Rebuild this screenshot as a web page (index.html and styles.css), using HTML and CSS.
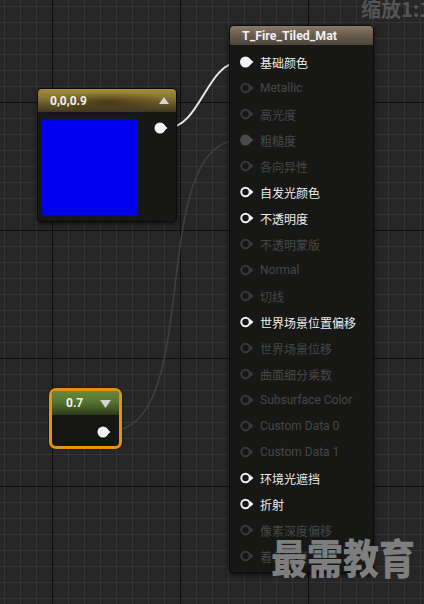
FILE: index.html
```html
<!DOCTYPE html>
<html>
<head>
<meta charset="utf-8">
<link rel="stylesheet" href="styles.css">
</head>
<body>
<div class="canvas">
  <svg class="wires" width="424" height="604" viewBox="0 0 424 604">
    <path d="M167,128 C200,128 207,62 240,62" fill="none" stroke="#e8e8e8" stroke-width="2"/>
    <path d="M110,431 C205,431 145,140 240,140" fill="none" stroke="#3e3e3e" stroke-width="1.6"/>
  </svg>

  <div class="zoom-label">缩放1:1</div>

  <div class="node const3">
    <div class="const3-head">
      <span class="node-title">0,0,0.9</span>
      <svg class="tri" width="10" height="7" viewBox="0 0 10 7"><polygon points="0,7 5,0 10,7" fill="#d4d4d4"/></svg>
    </div>
    <div class="const3-body">
      <div class="swatch"></div>
      <svg class="pin-out" width="16" height="12" viewBox="0 0 16 12"><circle cx="6" cy="6" r="5.5" fill="#f2f2f2"/><polygon points="10,3 13.5,6 10,9" fill="#f2f2f2"/></svg>
    </div>
  </div>

  <div class="node const1">
    <div class="const1-inner">
      <div class="const1-head">
        <span class="node-title">0.7</span>
        <svg class="tri" width="11" height="8" viewBox="0 0 11 8"><polygon points="0,0 11,0 5.5,8" fill="#d4d4d4"/></svg>
      </div>
      <div class="const1-body">
        <svg width="16" height="12" viewBox="0 0 16 12"><circle cx="6" cy="6" r="5.5" fill="#f2f2f2"/><polygon points="10,3 13.5,6 10,9" fill="#f2f2f2"/></svg>
      </div>
    </div>
  </div>

  <div class="node mat">
    <div class="mat-head"><span class="node-title">T_Fire_Tiled_Mat</span></div>
    <ul class="pins">
      <li class="pin linked"><svg width="15" height="12" viewBox="0 0 15 12"><circle cx="5.5" cy="6" r="5.5"/><polygon points="10,3 13.5,6 10,9"/></svg><span>基础颜色</span></li>
      <li class="pin off"><svg width="15" height="12" viewBox="0 0 15 12"><circle cx="5.5" cy="6" r="4.2"/><polygon points="10,3 13.5,6 10,9"/></svg><span>Metallic</span></li>
      <li class="pin off"><svg width="15" height="12" viewBox="0 0 15 12"><circle cx="5.5" cy="6" r="4.2"/><polygon points="10,3 13.5,6 10,9"/></svg><span>高光度</span></li>
      <li class="pin dimlinked"><svg width="15" height="12" viewBox="0 0 15 12"><circle cx="5.5" cy="6" r="5.5"/><polygon points="10,3 13.5,6 10,9"/></svg><span>粗糙度</span></li>
      <li class="pin off"><svg width="15" height="12" viewBox="0 0 15 12"><circle cx="5.5" cy="6" r="4.2"/><polygon points="10,3 13.5,6 10,9"/></svg><span>各向异性</span></li>
      <li class="pin on"><svg width="15" height="12" viewBox="0 0 15 12"><circle cx="5.5" cy="6" r="4.2"/><polygon points="10,3 13.5,6 10,9"/></svg><span>自发光颜色</span></li>
      <li class="pin on"><svg width="15" height="12" viewBox="0 0 15 12"><circle cx="5.5" cy="6" r="4.2"/><polygon points="10,3 13.5,6 10,9"/></svg><span>不透明度</span></li>
      <li class="pin off"><svg width="15" height="12" viewBox="0 0 15 12"><circle cx="5.5" cy="6" r="4.2"/><polygon points="10,3 13.5,6 10,9"/></svg><span>不透明蒙版</span></li>
      <li class="pin off"><svg width="15" height="12" viewBox="0 0 15 12"><circle cx="5.5" cy="6" r="4.2"/><polygon points="10,3 13.5,6 10,9"/></svg><span>Normal</span></li>
      <li class="pin off"><svg width="15" height="12" viewBox="0 0 15 12"><circle cx="5.5" cy="6" r="4.2"/><polygon points="10,3 13.5,6 10,9"/></svg><span>切线</span></li>
      <li class="pin on"><svg width="15" height="12" viewBox="0 0 15 12"><circle cx="5.5" cy="6" r="4.2"/><polygon points="10,3 13.5,6 10,9"/></svg><span>世界场景位置偏移</span></li>
      <li class="pin off"><svg width="15" height="12" viewBox="0 0 15 12"><circle cx="5.5" cy="6" r="4.2"/><polygon points="10,3 13.5,6 10,9"/></svg><span>世界场景位移</span></li>
      <li class="pin off"><svg width="15" height="12" viewBox="0 0 15 12"><circle cx="5.5" cy="6" r="4.2"/><polygon points="10,3 13.5,6 10,9"/></svg><span>曲面细分乘数</span></li>
      <li class="pin off"><svg width="15" height="12" viewBox="0 0 15 12"><circle cx="5.5" cy="6" r="4.2"/><polygon points="10,3 13.5,6 10,9"/></svg><span>Subsurface Color</span></li>
      <li class="pin off"><svg width="15" height="12" viewBox="0 0 15 12"><circle cx="5.5" cy="6" r="4.2"/><polygon points="10,3 13.5,6 10,9"/></svg><span>Custom Data 0</span></li>
      <li class="pin off"><svg width="15" height="12" viewBox="0 0 15 12"><circle cx="5.5" cy="6" r="4.2"/><polygon points="10,3 13.5,6 10,9"/></svg><span>Custom Data 1</span></li>
      <li class="pin on"><svg width="15" height="12" viewBox="0 0 15 12"><circle cx="5.5" cy="6" r="4.2"/><polygon points="10,3 13.5,6 10,9"/></svg><span>环境光遮挡</span></li>
      <li class="pin on"><svg width="15" height="12" viewBox="0 0 15 12"><circle cx="5.5" cy="6" r="4.2"/><polygon points="10,3 13.5,6 10,9"/></svg><span>折射</span></li>
      <li class="pin off"><svg width="15" height="12" viewBox="0 0 15 12"><circle cx="5.5" cy="6" r="4.2"/><polygon points="10,3 13.5,6 10,9"/></svg><span>像素深度偏移</span></li>
      <li class="pin off"><svg width="15" height="12" viewBox="0 0 15 12"><circle cx="5.5" cy="6" r="4.2"/><polygon points="10,3 13.5,6 10,9"/></svg><span>着色模型</span></li>
    </ul>
  </div>

  <div class="watermark">最需教育</div>
</div>
</body>
</html>
```

FILE: styles.css
```css
html, body {
  margin: 0;
  padding: 0;
  width: 424px;
  height: 604px;
  overflow: hidden;
  background: #262626;
}

.canvas {
  position: relative;
  width: 424px;
  height: 604px;
  overflow: hidden;
  font-family: Roboto, "Noto Sans CJK SC", sans-serif;
  background-color: #262626;
  background-image:
    linear-gradient(to right, #0e0e0e 1px, transparent 1px),
    linear-gradient(to bottom, #0e0e0e 1px, transparent 1px),
    linear-gradient(to right, #343434 1px, transparent 1px),
    linear-gradient(to bottom, #343434 1px, transparent 1px);
  background-size: 128px 128px, 128px 128px, 16px 16px, 16px 16px;
  background-position: 52px 0, 0 102px, 4px 0, 0 6px;
}

.wires {
  position: absolute;
  left: 0;
  top: 0;
  z-index: 1;
}

.zoom-label {
  position: absolute;
  left: 361px;
  top: -6px;
  font-family: "Noto Sans CJK SC", sans-serif;
  font-weight: 700;
  font-size: 20px;
  color: #555555;
  white-space: nowrap;
  z-index: 1;
}

.node {
  position: absolute;
  z-index: 2;
  box-sizing: border-box;
}

.node-title {
  font-family: Roboto, "Noto Sans CJK SC", sans-serif;
  font-weight: 700;
  font-size: 12px;
  color: #f0f0f0;
}

/* Constant3 node */
.const3 {
  left: 37px;
  top: 88px;
  width: 140px;
  height: 134px;
  border-radius: 5px;
  border: 1px solid #0b0b0b;
  background: #171816;
  box-shadow: 0 2px 4px rgba(0, 0, 0, 0.6);
  overflow: hidden;
  display: flex;
  flex-direction: column;
}

.const3-head {
  height: 23px;
  flex: none;
  display: flex;
  align-items: center;
  justify-content: space-between;
  padding: 0 7px 0 12px;
  background:
    radial-gradient(ellipse 60px 10px at 70px 13px, rgba(40, 30, 10, 0.55), transparent),
    linear-gradient(to bottom, #a68e3e 0%, #8a7533 35%, #5c4d24 75%, #3c3622 100%);
}

.const3-body {
  flex: 1;
  display: flex;
  align-items: flex-start;
  padding: 7px 0 0 4px;
  gap: 16px;
}

.swatch {
  width: 96px;
  height: 96px;
  background: #0000f0;
}

.pin-out {
  margin-top: 3px;
}

/* Constant node */
.const1 {
  left: 49px;
  top: 388px;
  width: 73px;
  height: 61px;
  border-radius: 7px;
  border: 3px solid #e89208;
  background: #151614;
  box-shadow: 0 0 2px rgba(0, 0, 0, 0.8);
}

.const1-inner {
  height: 100%;
  border-radius: 4px;
  overflow: hidden;
  display: flex;
  flex-direction: column;
}

.const1-head {
  height: 24px;
  flex: none;
  display: flex;
  align-items: center;
  justify-content: space-between;
  padding: 0 8px 0 14px;
  background: linear-gradient(to bottom, #6a8a3e 0%, #56742f 45%, #3c5222 80%, #2b3a1c 100%);
}

.const1-head .tri {
  margin-top: 1px;
}

.const1-body {
  flex: 1;
  display: flex;
  justify-content: flex-end;
  align-items: center;
  padding-right: 6px;
  padding-top: 2px;
}

/* Material node */
.mat {
  left: 229px;
  top: 25px;
  width: 145px;
  height: 548px;
  border-radius: 5px;
  border: 1px solid #0a0a0a;
  background: #171816;
  box-shadow: 0 2px 5px rgba(0, 0, 0, 0.65);
  overflow: hidden;
}

.mat-head {
  height: 19px;
  display: flex;
  align-items: center;
  padding-left: 12px;
  background: linear-gradient(to bottom, #8a7a69 0%, #6b5d50 45%, #4d433b 100%);
}

.mat-head .node-title {
  font-size: 12.4px;
}

.pins {
  list-style: none;
  margin: 0;
  padding: 4px 0 0 10px;
}

.pin {
  height: 26px;
  display: flex;
  align-items: center;
  font-size: 12px;
  gap: 5px;
  white-space: nowrap;
}

.pin svg {
  flex: none;
}

.pin.linked circle,
.pin.linked polygon {
  fill: #f4f4f4;
}
.pin.linked span {
  color: #ececec;
}

.pin.dimlinked circle,
.pin.dimlinked polygon {
  fill: #4a4a4a;
}
.pin.dimlinked span {
  color: #484848;
}

.pin.on circle {
  fill: none;
  stroke: #f0f0f0;
  stroke-width: 2;
}
.pin.on polygon {
  fill: #f0f0f0;
}
.pin.on span {
  color: #ececec;
}

.pin.off circle {
  fill: none;
  stroke: #393939;
  stroke-width: 2;
}
.pin.off polygon {
  fill: #393939;
}
.pin.off span {
  color: #464646;
}

.watermark {
  position: absolute;
  left: 271px;
  top: 533px;
  z-index: 3;
  font-family: "Noto Sans CJK SC", sans-serif;
  font-weight: 900;
  font-size: 36px;
  color: #7e7e7e;
  white-space: nowrap;
  line-height: 1.3;
  transform: scaleY(1.15);
  transform-origin: 0 50%;
}
```
